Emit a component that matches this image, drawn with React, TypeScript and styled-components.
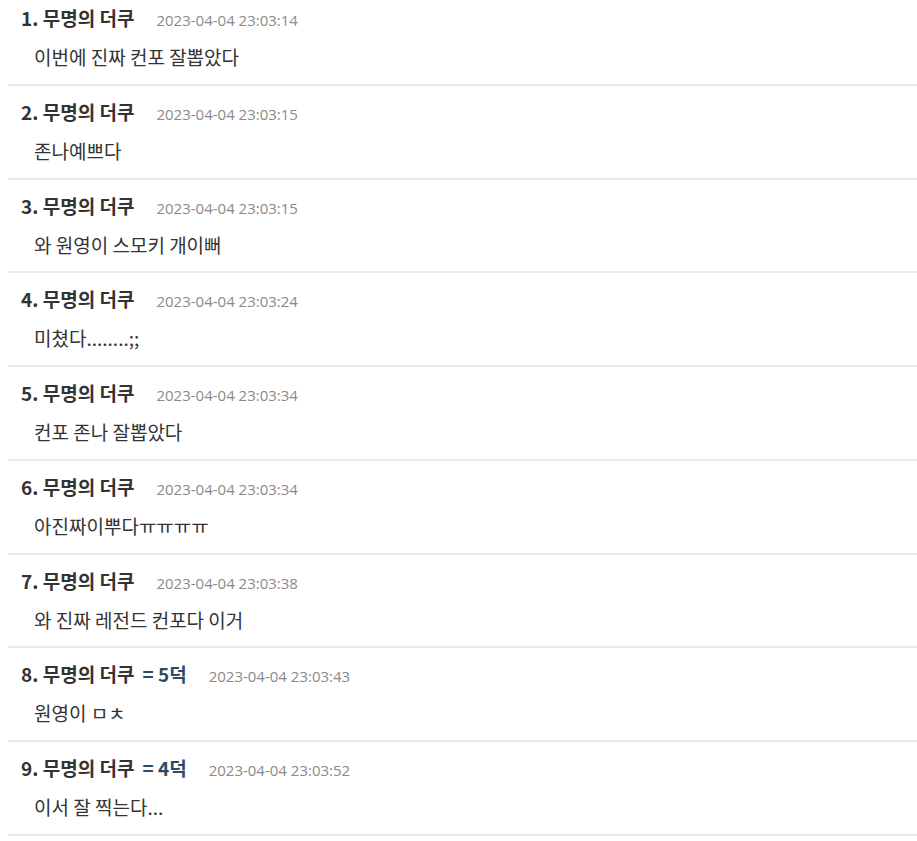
import * as React from 'react'
import styled, { createGlobalStyle } from 'styled-components'

type Comment = {
    no: number
    name: string
    score?: string
    date: string
    text: string
}

const comments: Comment[] = [
    { no: 1, name: '무명의 더쿠', date: '2023-04-04 23:03:14', text: '이번에 진짜 컨포 잘뽑았다' },
    { no: 2, name: '무명의 더쿠', date: '2023-04-04 23:03:15', text: '존나예쁘다' },
    { no: 3, name: '무명의 더쿠', date: '2023-04-04 23:03:15', text: '와 원영이 스모키 개이뻐' },
    { no: 4, name: '무명의 더쿠', date: '2023-04-04 23:03:24', text: '미쳤다........;;' },
    { no: 5, name: '무명의 더쿠', date: '2023-04-04 23:03:34', text: '컨포 존나 잘뽑았다' },
    { no: 6, name: '무명의 더쿠', date: '2023-04-04 23:03:34', text: '아진짜이뿌다ㅠㅠㅠㅠ' },
    { no: 7, name: '무명의 더쿠', date: '2023-04-04 23:03:38', text: '와 진짜 레전드 컨포다 이거' },
    { no: 8, name: '무명의 더쿠', score: '= 5덕', date: '2023-04-04 23:03:43', text: '원영이 ㅁㅊ' },
    { no: 9, name: '무명의 더쿠', score: '= 4덕', date: '2023-04-04 23:03:52', text: '이서 잘 찍는다...' },
]

const App: React.FC = () => (
    <>
        <GlobalStyle />
        <List>
            {comments.map(c => (
                <Row key={c.no}>
                    <Header>
                        <Name>
                            {c.no}. {c.name}
                            {c.score && <Score>{c.score}</Score>}
                        </Name>
                        <Date>{c.date}</Date>
                    </Header>
                    <Body>{c.text}</Body>
                </Row>
            ))}
        </List>
    </>
)

const GlobalStyle = createGlobalStyle`
    *, *::after, *::before {
      box-sizing: border-box;
    }
    body {
      margin: 0;
      background: #fff;
      font-family: "Noto Sans CJK KR", sans-serif;
      color: #333;
    }
`

const List = styled.div`
    margin-left: 8px;
`

const Row = styled.div`
    padding: 14px 0 14.75px;
    border-bottom: 2px solid #ebebeb;

    &:first-child {
        padding-top: 6px;
    }
`

const Header = styled.div`
    display: flex;
    align-items: baseline;
    padding-left: 13px;
    height: 24px;
    line-height: 24px;
`

const Name = styled.span`
    font-family: "Noto Sans CJK KR", sans-serif;
    font-size: 19px;
    font-weight: 700;
    color: #333;
`

const Score = styled.span`
    margin-left: 8px;
    color: #2c4a63;
`

const Date = styled.span`
    margin-left: 22px;
    font-family: "Open Sans", "Noto Sans", sans-serif;
    font-size: 15px;
    color: #8a8a8a;
`

const Body = styled.div`
    margin-top: 15px;
    padding-left: 26px;
    height: 24px;
    line-height: 24px;
    font-family: "Noto Sans CJK KR", sans-serif;
    font-size: 19px;
    color: #333;
`

export default App
